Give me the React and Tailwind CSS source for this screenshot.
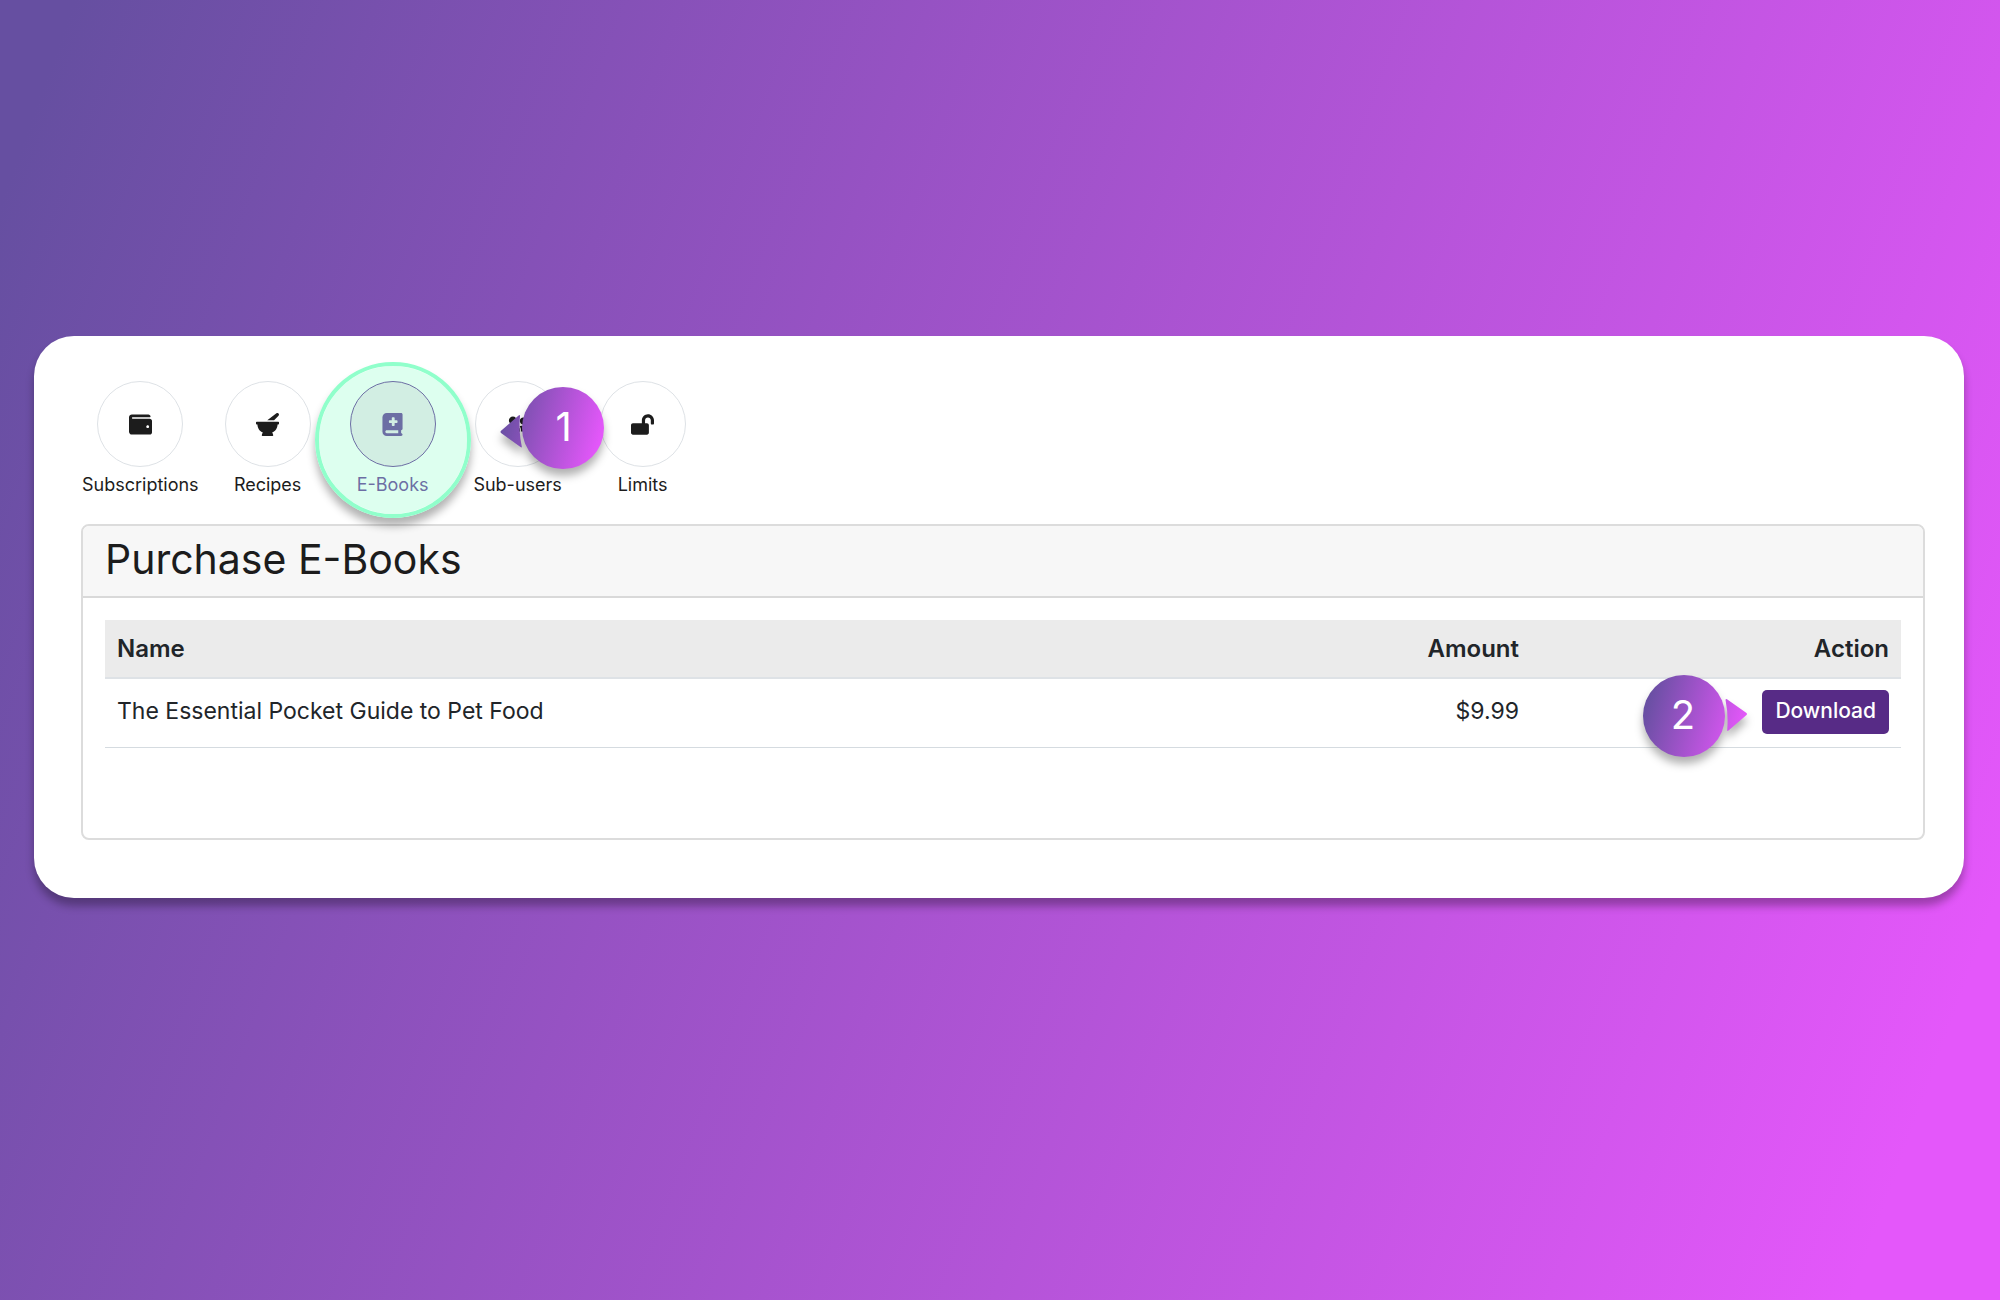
import { FaWallet, FaMortarPestle, FaUserFriends, FaLockOpen } from "react-icons/fa";
import { FaBookMedical } from "react-icons/fa6";

const tabs = [
  { label: "Subscriptions", icon: FaWallet },
  { label: "Recipes", icon: FaMortarPestle },
  { label: "E-Books", icon: FaBookMedical, active: true },
  { label: "Sub-users", icon: FaUserFriends },
  { label: "Limits", icon: FaLockOpen },
];

const books = [{ name: "The Essential Pocket Guide to Pet Food", amount: "$9.99" }];

function Marker({ number, pointing, className }) {
  const left = pointing === "left";
  const id = "marker-" + number;
  return (
    <div className={"pointer-events-none absolute z-20 h-[82px] w-[104px] " + className}>
      <svg
        viewBox="0 0 104 82"
        className="absolute inset-0 h-full w-full overflow-visible drop-shadow-[0_7px_4px_rgba(0,0,0,0.3)]"
        aria-hidden="true"
      >
        <defs>
          <linearGradient id={id} gradientUnits="userSpaceOnUse" x1="2" y1="26" x2="100" y2="54">
            <stop offset="0" stopColor="#664fa1" />
            <stop offset="1" stopColor="#e457fa" />
          </linearGradient>
        </defs>
        {left ? (
          <g fill={`url(#${id})`}>
            <circle cx="63" cy="41" r="41" />
            <path d="M0.8 44 Q0 45 1 46 L20.5 60 Q22 61 21.8 59.5 Q18.5 44 20 29 Q20 27.3 18.6 28.6 Z" />
          </g>
        ) : (
          <g fill={`url(#${id})`}>
            <circle cx="41" cy="41" r="41" />
            <path d="M103.5 38 Q104.4 39 103.5 40 L85.5 55.5 Q84 56.5 84.2 55 Q85.5 40 82.6 25.5 Q82.3 23.4 84 24.3 Z" />
          </g>
        )}
      </svg>
      <span
        className={
          "absolute top-0 flex h-[80px] w-[80px] items-center justify-center text-[40px] font-normal text-white " +
          (left ? "right-0" : "left-0")
        }
      >
        {number}
      </span>
    </div>
  );
}

function Tab({ label, icon: Icon, active }) {
  return (
    <div className="relative">
      <button
        type="button"
        className={
          "flex min-w-[112px] cursor-pointer flex-col items-center gap-1 " +
          (active ? "text-[#5e3094]" : "text-[#1c1c1c]")
        }
      >
        <span
          className={
            "flex h-[86px] w-[86px] items-center justify-center rounded-full border text-[23px] " +
            (active ? "border-[#5e3094] bg-[#f0e7ee]" : "border-[#dee2e6]")
          }
        >
          <Icon />
        </span>
        <span className="text-[18px] leading-[27px]">{label}</span>
      </button>
      {active && (
        <span className="pointer-events-none absolute -top-[19px] left-1/2 z-10 h-[156px] w-[156px] -translate-x-1/2 rounded-full border-4 border-[#90ffcb] bg-[#90ffcb]/30 bg-clip-padding shadow-[0_8px_8px_rgba(0,0,0,0.3)]" />
      )}
      {label === "Sub-users" && <Marker number="1" pointing="left" className="top-[6px] left-[38px]" />}
    </div>
  );
}

export default function App() {
  return (
    <div className="min-h-screen bg-[linear-gradient(110deg,#664fa1_3%,#e457fa_94%)] pt-[336px] pr-9 pb-20 pl-[34px] font-['Inter',sans-serif]">
      <main className="rounded-[40px] bg-white pt-[45px] pr-[39px] pb-[58px] pl-[47px] shadow-[0_8px_8px_rgba(0,0,0,0.3)]">
        <nav className="flex gap-[13px] pl-px" aria-label="Account">
          {tabs.map((tab) => (
            <Tab key={tab.label} {...tab} />
          ))}
        </nav>

        <section className="mt-[26px] rounded-lg border-2 border-[#dcdcdc]">
          <header className="rounded-t-md border-b-2 border-[#d9d9d9] bg-[#f7f7f7] px-[22px] pt-[5px] pb-2">
            <h1 className="text-[41px] leading-[57px] text-[#1c1c1c]">Purchase E-Books</h1>
          </header>
          <div className="px-[22px] pt-[22px] pb-[90px]">
            <table className="w-full table-fixed text-[#212529]">
              <colgroup>
                <col />
                <col className="w-[20%]" />
                <col className="w-[370px]" />
              </colgroup>
              <thead>
                <tr className="border-b-2 border-[#dee2e6] bg-[#ebebeb] text-[24px] leading-[33px]">
                  <th className="px-3 py-3 text-left font-semibold">Name</th>
                  <th className="px-3 py-3 text-right font-semibold">Amount</th>
                  <th className="px-3 py-3 text-right font-semibold">Action</th>
                </tr>
              </thead>
              <tbody>
                {books.map((book) => (
                  <tr key={book.name} className="border-b border-[#d5dbe0] text-[23px]">
                    <td className="px-3 py-3 pb-4">{book.name}</td>
                    <td className="px-3 py-3 pb-4 text-right">{book.amount}</td>
                    <td className="px-3 pt-[11px] pb-[13px]">
                      <div className="flex justify-end">
                        <div className="relative">
                          <Marker number="2" pointing="right" className="-top-[15px] right-[142px]" />
                          <button
                            type="button"
                            className="block cursor-pointer rounded-[5px] bg-[#572b86] px-[13px] pt-1.5 pb-2 text-[21px] leading-[30px] font-medium text-white"
                          >
                            Download
                          </button>
                        </div>
                      </div>
                    </td>
                  </tr>
                ))}
              </tbody>
            </table>
          </div>
        </section>
      </main>
    </div>
  );
}
